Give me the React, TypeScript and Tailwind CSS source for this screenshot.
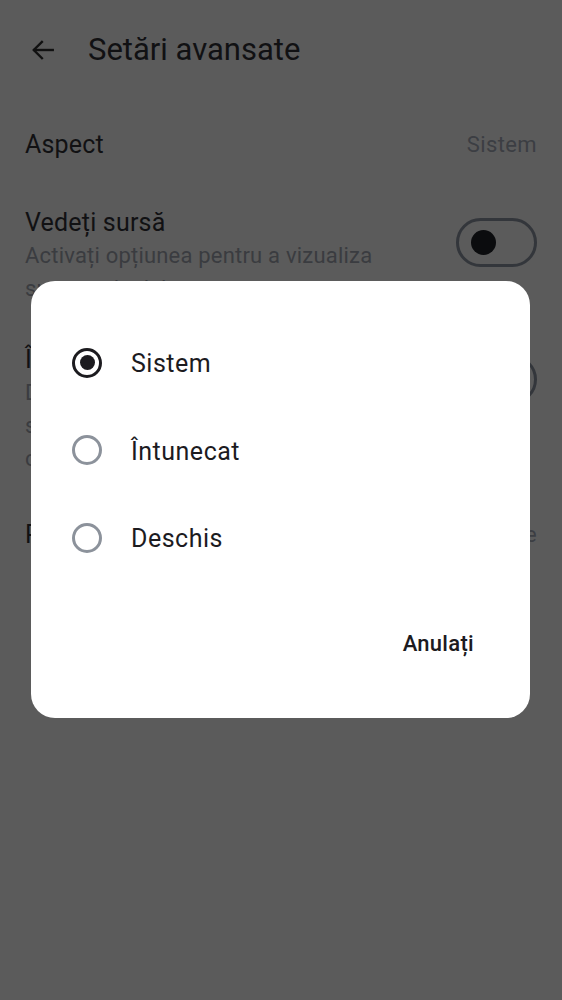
import React from "react";

function Toggle() {
  return (
    <div className="w-[81px] h-[49px] rounded-full border-[3px] border-[#33363b] flex items-center pl-[12px] shrink-0">
      <div className="w-[25px] h-[25px] rounded-full bg-[#0b0c0e]" />
    </div>
  );
}

function Radio({ selected }: { selected?: boolean }) {
  return selected ? (
    <div className="w-[30px] h-[30px] rounded-full border-[3px] border-[#1c1b1f] flex items-center justify-center shrink-0">
      <div className="w-[15px] h-[15px] rounded-full bg-[#1c1b1f]" />
    </div>
  ) : (
    <div className="w-[30px] h-[30px] rounded-full border-[3px] border-[#8c929b] shrink-0" />
  );
}

export default function App() {
  const font = { fontFamily: "Roboto, 'Noto Sans', sans-serif" };
  return (
    <div className="relative w-[562px] h-[1000px] bg-[#5b5b5b] overflow-hidden" style={font}>
      {/* Header */}
      <div className="h-[100px] flex items-center pl-[30px] gap-[32px]">
        <svg width="26" height="26" viewBox="0 0 24 24" fill="none" stroke="#111" strokeWidth="2.2" strokeLinecap="square">
          <path d="M21 12H4" />
          <path d="M11 4.5 3.5 12l7.5 7.5" />
        </svg>
        <div className="text-[31px] leading-[40px] text-[#111113]">Setări avansate</div>
      </div>

      {/* Settings */}
      <div className="px-[25px] flex flex-col">
        <div className="h-[88px] flex items-center justify-between">
          <div className="text-[25px] leading-[33px] text-[#111113] tracking-[0.2px]">Aspect</div>
          <div className="text-[22px] leading-[33px] text-[#3c3e43] tracking-[0.4px]">Sistem</div>
        </div>
        <div className="pt-[18px] flex items-start justify-between gap-6">
          <div className="flex flex-col">
            <div className="text-[25px] leading-[33px] text-[#111113] tracking-[0.2px]">Vedeți sursă</div>
            <div className="text-[22px] leading-[33px] text-[#3a3c40] tracking-[0.2px]">
              Activați opțiunea pentru a vizualiza
              <br />
              sursa articolelor
            </div>
          </div>
          <div className="mt-[12px]">
            <Toggle />
          </div>
        </div>
        <div className="pt-[38px] flex items-start justify-between gap-6">
          <div className="flex flex-col">
            <div className="text-[25px] leading-[33px] text-[#111113] tracking-[0.2px]">Întunecare pagini web</div>
            <div className="text-[22px] leading-[33px] text-[#3a3c40] tracking-[0.2px]">
              Dacă este disponibil, afișați
              <br />
              site-urile web în modul întunecat
              <br />
              când tema este întunecată
            </div>
          </div>
          <div className="mt-[12px]">
            <Toggle />
          </div>
        </div>
        <div className="pt-[43px] flex items-center justify-between">
          <div className="text-[25px] leading-[33px] text-[#111113] tracking-[0.2px]">Pagină de pornire</div>
          <div className="text-[22px] leading-[33px] text-[#3c3e43] tracking-[0.4px]">Implicite</div>
        </div>
      </div>

      {/* Dialog */}
      <div className="absolute left-[31px] top-[281px] w-[499px] h-[437px] bg-white rounded-[24px] flex flex-col pt-[38px]">
        {["Sistem", "Întunecat", "Deschis"].map((t, i) => (
          <div key={t} className="h-[87.5px] flex items-center pl-[41px] gap-[29px]">
            <Radio selected={i === 0} />
            <div className="text-[25px] leading-[33px] text-[#1c1b1f] tracking-[0.5px] pt-[2px]">{t}</div>
          </div>
        ))}
        <div className="flex justify-end pr-[56px] mt-[45px]">
          <div
            className="text-[22px] leading-[33px] font-medium text-[#1c1b1f] tracking-[0.3px]"
            style={{ fontFamily: "'Roboto Medium', Roboto, sans-serif" }}
          >
            Anulați
          </div>
        </div>
      </div>
    </div>
  );
}
